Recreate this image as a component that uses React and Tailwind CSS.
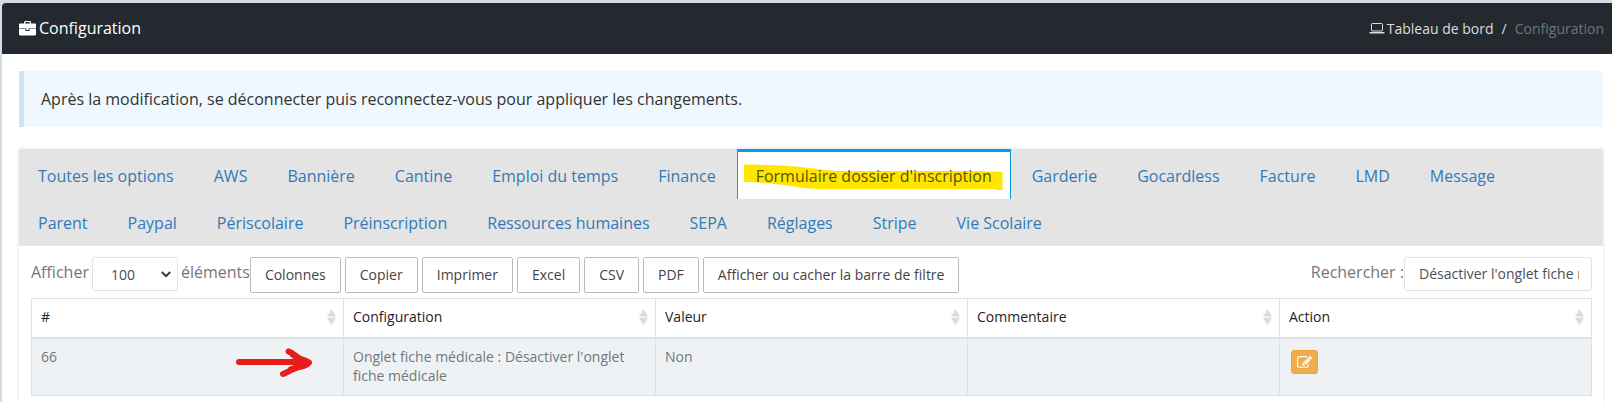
import React, { useState } from 'react';

const TABS = [
  'Toutes les options',
  'AWS',
  'Bannière',
  'Cantine',
  'Emploi du temps',
  'Finance',
  "Formulaire dossier d'inscription",
  'Garderie',
  'Gocardless',
  'Facture',
  'LMD',
  'Message',
  'Parent',
  'Paypal',
  'Périscolaire',
  'Préinscription',
  'Ressources humaines',
  'SEPA',
  'Réglages',
  'Stripe',
  'Vie Scolaire',
];

const HIGHLIGHTED_TAB = "Formulaire dossier d'inscription";

const EXPORT_BUTTONS = ['Colonnes', 'Copier', 'Imprimer', 'Excel', 'CSV', 'PDF', 'Afficher ou cacher la barre de filtre'];

const COLUMNS = ['#', 'Configuration', 'Valeur', 'Commentaire', 'Action'];

const ROWS = [
  { id: 66, name: "Onglet fiche médicale : Désactiver l'onglet fiche médicale", value: 'Non', comment: '' },
];

const LaptopIcon = () => (
  <svg className="h-[11px] w-4 shrink-0" viewBox="0 0 16 11" fill="none" aria-hidden="true">
    <rect x="2.5" y="0.5" width="11" height="7.5" rx="0.75" stroke="currentColor" />
    <path d="M0.5 9h15v0.7c0 .5-.5.9-1 .9h-13c-.5 0-1-.4-1-.9z" fill="currentColor" />
  </svg>
);

const BriefcaseIcon = () => (
  <svg className="h-[15px] w-[17px] shrink-0" viewBox="0 0 17 15" aria-hidden="true">
    <path d="M5.6 3V1.6C5.6.8 6 .5 6.7.5h3.6c.7 0 1.1.3 1.1 1.1V3" fill="none" stroke="#fff" strokeWidth="1.2" />
    <path d="M1.2 2.6h14.6c.7 0 1.2.5 1.2 1.1v3.7H0V3.7c0-.6.5-1.1 1.2-1.1z" fill="#fff" />
    <path d="M0 8h6.3v.9c0 .6.4 1 1 1h2.4c.6 0 1-.4 1-1V8H17v5.200c0 .7-.5 1.200-1.200 1.200H1.200c-.7 0-1.200-.5-1.200-1.200z" fill="#fff" />
    <path d="M7.2 7.4h2.6v1.6H7.2z" fill="#fff" />
  </svg>
);

const EditIcon = () => (
  <svg className="h-[15px] w-[15px]" viewBox="0 0 1792 1792" fill="currentColor" aria-hidden="true">
    <path d="M888 1184l116-116-152-152-116 116v56h96v96h56zm440-720q-16-16-33 1l-350 350q-17 17-1 33t33-1l350-350q17-17 1-33zm80 594v190q0 119-84.5 203.5t-203.5 84.5h-832q-119 0-203.5-84.5t-84.5-203.5v-832q0-119 84.5-203.5t203.5-84.5h832q63 0 117 25 15 7 18 23 3 17-9 29l-49 49q-14 14-32 8-23-6-45-6h-832q-66 0-113 47t-47 113v832q0 66 47 113t113 47h832q66 0 113-47t47-113v-126q0-13 9-22l64-64q15-15 35-7t20 29zm-96-738l288 288-672 672h-288v-288zm444 132l-92 92-288-288 92-92q28-28 68-28t68 28l152 152q28 28 28 68t-28 68z" />
  </svg>
);

const SortIcon = () => (
  <svg className="h-4 w-[9px] shrink-0 text-[#dcdcdc]" viewBox="0 0 9 16" fill="currentColor" aria-hidden="true">
    <path d="M4.5 0 9 7.4H0z" />
    <path d="M4.5 16 9 8.8H0z" />
  </svg>
);

// Hand drawn marker stroke behind the tab label
const Marker = () => (
  <svg className="absolute left-[6px] top-3 h-[27px] w-[259px]" viewBox="0 0 255 27" preserveAspectRatio="none" aria-hidden="true">
    <path
      d="M0 0.5C20 0.5 45 2 60 3.4C72 4.6 84 7 98 7H232C240 7 247 8 254.5 8V26H248L247 25H75C60 25 48 22 35 20.5C22 19 10 18 0 18z"
      fill="#ffe600"
    />
  </svg>
);

const RedArrow = () => (
  <svg className="absolute right-[30px] top-2 h-[31px] w-[78px]" viewBox="0 0 78 31" fill="none" aria-hidden="true">
    <path
      d="M4 15H72M53.5 4.5C57 5.5 60 8.5 64 11C67.5 13 71 13.5 74 15.5C72 19 68 19 64 20C58 21.5 53 25 48 27M58 8L72 17L56 22"
      stroke="#e71d1c"
      strokeWidth="6"
      strokeLinecap="round"
      strokeLinejoin="round"
    />
  </svg>
);

const Tab = ({ label, active, onClick }) => (
  <li>
    <button
      type="button"
      onClick={onClick}
      className={
        active
          ? 'relative block border-x border-t-3 border-[#069be5] bg-white px-[18px] pt-3 pb-[11px] leading-6 text-[#555]'
          : 'block border-x border-transparent px-[18px] pt-3 pb-[11px] leading-6 text-[#337ab7]'
      }
    >
      {active && label === HIGHLIGHTED_TAB && <Marker />}
      <span className={active ? 'relative text-[#5a5200]' : ''}>{label}</span>
    </button>
  </li>
);

const App = () => {
  const [activeTab, setActiveTab] = useState(HIGHLIGHTED_TAB);
  const [search, setSearch] = useState("Désactiver l'onglet fiche médicale");

  return (
    <div className="flex min-h-screen flex-col bg-[#d5dbe6] pt-[3px] pl-[2px] font-['Open_Sans',sans-serif] text-base text-[#73777b]">
      <header className="flex items-center justify-between rounded-tl bg-[#242930] py-[13px] pr-2 pl-[17px]">
        <h1 className="flex items-center gap-[3px] text-base leading-[25px] font-normal text-white">
          <BriefcaseIcon />
          Configuration
        </h1>
        <nav aria-label="Fil d'Ariane">
          <ol className="flex items-center text-sm leading-[25px] text-[#dcdcdc]">
            <li>
              <a href="#tableau" className="flex items-center gap-[2px]">
                <LaptopIcon />
                Tableau de bord
              </a>
            </li>
            <li className="px-2">/</li>
            <li className="text-[#6c757d]">Configuration</li>
          </ol>
        </nav>
      </header>

      <main className="flex-1 bg-white pt-[17px] pr-[9px] pl-[17px]">
        <div className="border-l-5 border-[#d0e3f0] bg-[#eff7ff] px-[17px] py-4 leading-6 text-[#333]">
          Après la modification, se déconnecter puis reconnectez-vous pour appliquer les changements.
        </div>

        <section className="mt-[22px] shadow-[0_0_4px_rgba(0,0,0,0.12)]">
          <ul className="flex flex-wrap items-end gap-x-[2px] bg-[#e4e4e4] pr-3">
            {TABS.map((tab) => (
              <Tab key={tab} label={tab} active={tab === activeTab} onClick={() => setActiveTab(tab)} />
            ))}
          </ul>

          <div className="pt-[11px] pr-[11px] pb-5 pl-3">
            <div className="flex items-start justify-between">
              <div className="flex items-start">
                <label htmlFor="page-size" className="mr-[3px] leading-[30px]">Afficher</label>
                <div className="relative">
                  <select
                    id="page-size"
                    defaultValue="100"
                    className="h-[34px] w-[86px] appearance-none rounded-[3px] border border-[#dfe3e9] bg-white pt-[2px] pl-[18px] text-sm text-[#495057]"
                  >
                    <option>10</option>
                    <option>25</option>
                    <option>50</option>
                    <option>100</option>
                  </select>
                  <svg className="pointer-events-none absolute top-[14px] right-[7px] h-[7px] w-[10px]" viewBox="0 0 10 7" fill="none" aria-hidden="true">
                    <path d="M0.8 1 5 5.2 9.2 1" stroke="#333" strokeWidth="1.8" />
                  </svg>
                </div>
                <span className="ml-[3px] leading-[30px]">éléments</span>
                <div className="flex gap-1">
                  {EXPORT_BUTTONS.map((label) => (
                    <button
                      key={label}
                      type="button"
                      className="rounded-[2px] border border-[#bbb] bg-white px-[14px] py-[7px] text-sm leading-5 text-[#444]"
                    >
                      {label}
                    </button>
                  ))}
                </div>
              </div>
              <div className="flex items-start">
                <label htmlFor="search" className="leading-[30px]">Rechercher :</label>
                <input
                  id="search"
                  type="text"
                  value={search}
                  onChange={(e) => setSearch(e.target.value)}
                  className="h-[34px] w-[188px] rounded-[3px] border border-[#dfe3e9] bg-white pr-3 pb-[2px] pl-[14px] text-sm text-[#495057]"
                />
              </div>
            </div>

            <table className="mt-[5px] w-full table-fixed border-collapse border border-[#dee2e6] text-left text-sm leading-[19px]">
              <thead>
                <tr>
                  {COLUMNS.map((col) => (
                    <th key={col} scope="col" className="border border-b-2 border-[#dee2e6] pt-2 pr-[7px] pb-[11px] pl-[9px] font-normal text-[#212529]">
                      <div className="flex items-center justify-between">
                        {col}
                        <SortIcon />
                      </div>
                    </th>
                  ))}
                </tr>
              </thead>
              <tbody>
                {ROWS.map((row) => (
                  <tr key={row.id} className="bg-[#eef2f5] align-top">
                    <td className="relative border border-[#dee2e6] px-[9px] pt-2 pb-[10px]">
                      {row.id}
                      <RedArrow />
                    </td>
                    <td className="border border-[#dee2e6] px-[9px] pt-2 pb-[10px]">{row.name}</td>
                    <td className="border border-[#dee2e6] px-[9px] pt-2 pb-[10px]">{row.value}</td>
                    <td className="border border-[#dee2e6] px-[9px] pt-2 pb-[10px]">{row.comment}</td>
                    <td className="border border-[#dee2e6] px-[11px] pt-[11px]">
                      <button
                        type="button"
                        aria-label="Modifier"
                        className="flex h-6 w-[27px] items-center justify-center rounded-[3px] border border-[#eea236] bg-[#f0ad4e] text-white"
                      >
                        <EditIcon />
                      </button>
                    </td>
                  </tr>
                ))}
              </tbody>
            </table>
          </div>
        </section>
      </main>
    </div>
  );
};

export default App;
